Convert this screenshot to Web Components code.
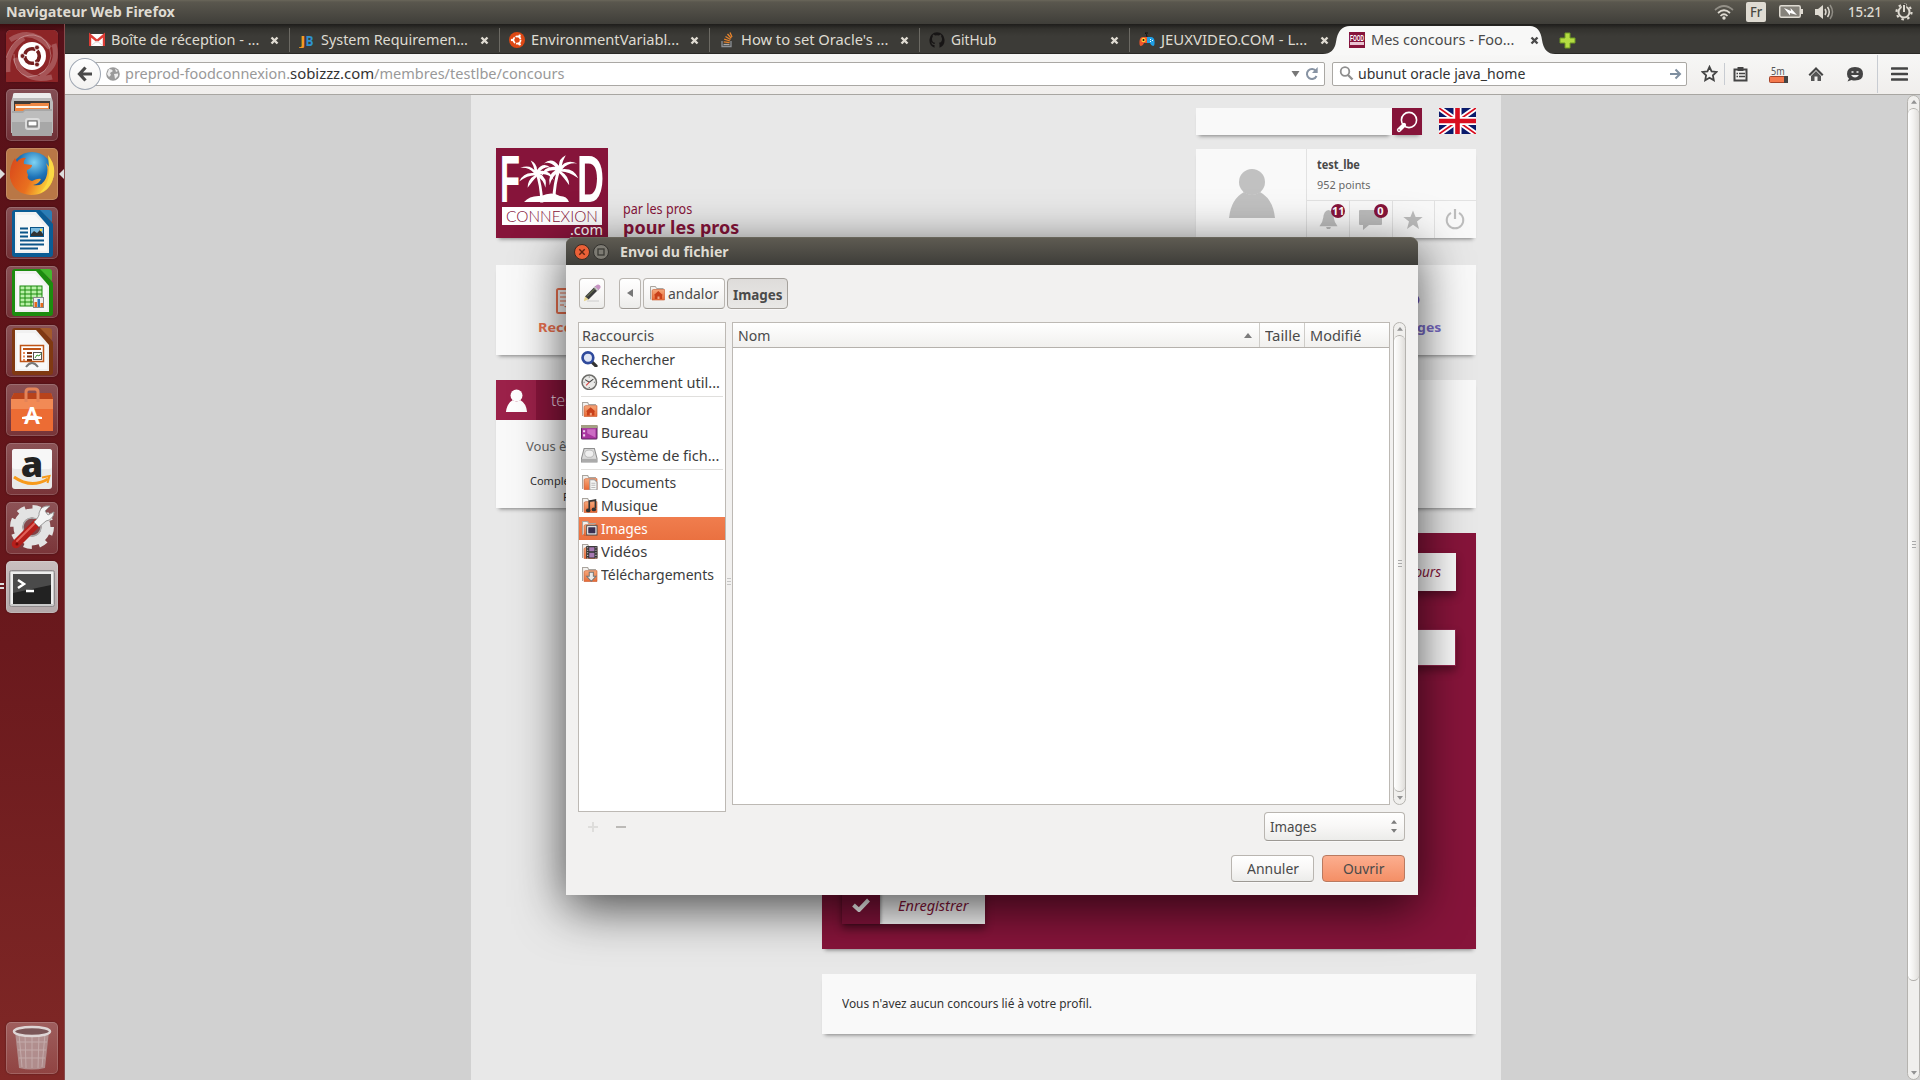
<!DOCTYPE html>
<html lang="fr">
<head>
<meta charset="utf-8">
<title>Mes concours - FoodConnexion</title>
<style>
html,body{margin:0;height:100%;overflow:hidden}
body{width:1920px;height:1080px;font-family:"Noto Sans","Open Sans",sans-serif;font-size:14.5px;color:#3c3c3c;background:#d1d1d1}
</style>
</head>
<body>
<desk-top></desk-top>
<script>
const fitted = new Set();
function fit(el){
  const s = el.shadowRoot.querySelector('span'), w = parseFloat(el.getAttribute('w'));
  const n = s.offsetWidth;
  if (w && n) s.style.transform = 'scaleX(' + (w / n) + ')';
}
function define(name, html, after){
  const t = document.createElement('template');
  t.innerHTML = html;
  customElements.define(name, class extends HTMLElement {
    connectedCallback(){
      if (this.shadowRoot) return;
      this.attachShadow({mode:'open'}).appendChild(t.content.cloneNode(true));
      if (after) after(this, this.shadowRoot);
    }
  });
}

/* Text squeezed or stretched to a given advance width */
define('fit-text', `<style>:host{display:inline-block;white-space:nowrap;flex:none}span{display:inline-block;transform-origin:0 50%}</style><span><slot></slot></span>`,
  el => { el.style.width = el.getAttribute('w') + 'px'; fitted.add(el); fit(el); });

const folder = extra => `<path d="M1.5 14.5V1.5H6.5L7.5 3.5H14.5" fill="#f3f1ee" stroke="#a9a49e"/><path d="M3 15V6Q3 4.5 4.5 4.5H15.5V15Z" fill="url(#fo)" stroke="#c6582c" stroke-width=".6"/><defs><linearGradient id="fo" x2="0" y2="1"><stop offset="0" stop-color="#f5a77a"/><stop offset="1" stop-color="#ea6a35"/></linearGradient></defs>${extra}`;
const doc = (c1, c2, body) => `<path d="M9 3H35L47 17V47Q47 50 44 50H9Q6 50 6 47V6Q6 3 9 3Z" fill="${c2}"/><path d="M34 3H43Q46 3 46 6V15Z" fill="${c1}"/><path d="M9 5H30L43 20V46H9Z" fill="#f1f1f1"/><path d="M11 8H29L41 22V44H11Z" fill="#fff" opacity=".6"/>${body}`;
const person = '<circle cx="25" cy="14" r="13"/><path d="M2 50Q4 31 17 24Q25 30 33 24Q46 31 48 50Z"/>';
const palm = (x, y, s) => `<g transform="translate(${x} ${y}) scale(${s})"><path d="M0 0Q-5-8-15-4Q-7-5-2 1Q-12 0-16 9Q-8 3-1 3Q-8 7-8 15Q-3 8 1 4Q7 7 9 15Q11 6 4 2Q12 1 17 8Q14-2 4-1Q9-6 14-4Q7-10 1-2Q1-8-5-11Q-2-6-1 0Z"/><path d="M-1 0Q4 13 4 29H7Q6 13 2 0Z"/></g>`;
const I = {
 dash:[52,52,`<rect width="52" height="52" fill="#8d2527"/><g fill="none" stroke="#fff"><path d="M4 10Q26-4 44 18M48 14Q54 36 34 46M46 47Q18 54 9 28M2 42Q0 20 18 8" opacity=".22" stroke-width="5"/><path d="M0 28Q8 4 28 5Q44 8 45 26Q43 46 22 47Q7 42 8 24" opacity=".3"/></g><circle cx="26" cy="26" r="14" fill="#fff"/><circle cx="26" cy="26" r="7.3" fill="none" stroke="#741f20" stroke-width="3.6" stroke-dasharray="13.5 1.8" stroke-dashoffset="6"/><g fill="#741f20" stroke="#fff" stroke-width=".7"><circle cx="16.5" cy="26" r="2.4"/><circle cx="31" cy="17.5" r="2.4"/><circle cx="31" cy="34.5" r="2.4"/></g>`],
 files:[52,52,`<path d="M7 6Q7 4 9 4H43Q45 4 45 6L47 13V44H5V13Z" fill="#bcbcbc"/><path d="M7 6Q7 4 9 4H43Q45 4 45 6L45 9H7Z" fill="#ececec"/><path d="M8 12H44V25H8Z" fill="#3f3b38"/><path d="M9 15H24L25 14H43V22H9Z" fill="#ee8743"/><path d="M10 17H42V19H10Z" fill="#fff4e8"/><path d="M6 22Q6 22 17 22L19 20H46V46Q46 47 45 47H7Q6 47 6 46Z" fill="#a7a7a7"/><path d="M6 24H17L19 22H46V33H6Z" fill="#bdbdbd"/><rect x="20" y="30" width="13" height="10" rx="2" fill="none" stroke="#dcdcdc" stroke-width="2"/><rect x="22" y="32" width="9" height="5" fill="#fff" stroke="#666"/>`],
 firefox:[52,52,`<defs><radialGradient id="g" cx=".55" cy=".25" r=".7"><stop offset="0" stop-color="#7fd3f4"/><stop offset=".5" stop-color="#1e74b8"/><stop offset="1" stop-color="#123a77"/></radialGradient><linearGradient id="f" x2="1" y2=".4"><stop offset="0" stop-color="#d8471b"/><stop offset=".6" stop-color="#e9701f"/><stop offset="1" stop-color="#fbd33b"/></linearGradient></defs><circle cx="26" cy="25" r="21" fill="url(#g)"/><path d="M46 14Q50 24 46 34Q40 47 25 47Q8 46 4 30Q3 18 9 10L11 14Q15 9 20 10Q17 13 18 16L26 17Q26 20 21 22Q20 24 22 27Q20 31 26 33Q32 30 35 31Q33 36 27 37Q36 39 40 30Q43 22 40 15L44 20Z" fill="url(#f)"/><path d="M42 7Q52 20 46 33Q42 42 34 45Q43 36 43 25Q43 16 42 7Z" fill="#fbd944"/>`],
 writer:[52,52,doc('#2b7db5','#0b5c95','<g stroke="#0b5488" stroke-width="2"><path d="M14 21.5H22M14 25.500H22M14 29.500H22M14 33.500H38M14 37.500H38M14 41.500H32"/></g><rect x="24.500" y="20.500" width="13" height="9" fill="#7dbbe0" stroke="#0b5488"/><path d="M25 29V27L28 24L31 26L34 23L37 27V29Z" fill="#333"/><circle cx="35" cy="23" r="1.200" fill="#ffd93b"/>')],
 calc:[52,52,doc('#43b82d','#1c8c0e','<rect x="14" y="20" width="22" height="20" fill="#b9f0a8" stroke="#1a8a0c"/><path d="M14 24H36M14 28H36M14 32H36M14 36H36M19 20V40M25 20V40M31 20V40" stroke="#1a8a0c"/><rect x="27.500" y="31.500" width="10" height="10" fill="#eee" stroke="#888"/><path d="M28.500 36H31V41H28.500Z" fill="#e66a1a"/><path d="M31.500 33H34V41H31.500Z" fill="#2d77b5"/><path d="M34.500 37H37V41H34.500Z" fill="#e66a1a"/>')],
 impress:[52,52,doc('#a35a2b','#803912','<rect x="14.500" y="20.500" width="23" height="16" fill="#fff" stroke="#bf5517" stroke-width="1.500"/><path d="M17 24H35" stroke="#bf5517" stroke-width="2"/><path d="M17 28H19M17 31.500H19M17 35H19" stroke="#e88b57" stroke-width="2"/><path d="M21 28H26M21 31.500H26M21 35H26" stroke="#7d3510" stroke-width="2"/><rect x="27.500" y="27.500" width="8" height="7" fill="#fff" stroke="#555"/><path d="M29 33L31 30L33 31L35 28.500" stroke="#35962e" fill="none"/><path d="M20 42Q23 38 26 38Q29 38 32 42" stroke="#777" fill="none" stroke-width="2"/>')],
 soft:[52,52,`<path d="M5 15L8 9H45L47 15V47H5Z" fill="#ec6c34"/><path d="M5 15L8 9H45L47 15Z" fill="#b8431b"/><path d="M5 15H47V25H5Z" fill="#f28a55"/><path d="M20 18V8Q20 5 23 5H29Q32 5 32 8V18" fill="none" stroke="#e38358" stroke-width="3"/><text x="26" y="40" font-family="Lato,sans-serif" font-weight="900" font-size="22" text-anchor="middle" fill="#fff">A</text><path d="M16 33Q26 30 36 33V35H16Z" fill="#fff"/>`],
 amazon:[52,52,`<rect x="6" y="6" width="40" height="40" rx="3" fill="#e9e9e9"/><rect x="6" y="6" width="40" height="20" rx="3" fill="#f7f7f7"/><text x="26" y="34" font-family="Open Sans,sans-serif" font-weight="800" font-size="36" text-anchor="middle" fill="#222">a</text><path d="M8 34Q25 46 42 36" stroke="#f79a1c" stroke-width="3" fill="none"/><path d="M36 34.500L43.500 33L41.500 40" stroke="#f79a1c" stroke-width="2" fill="none"/>`],
 settings:[52,52,`<circle cx="26" cy="25" r="14" fill="none" stroke="#e3e3e3" stroke-width="9"/><circle cx="26" cy="25" r="19.500" fill="none" stroke="#e3e3e3" stroke-width="5" stroke-dasharray="8 7.300"/><circle cx="26" cy="25" r="9" fill="none" stroke="#a9a9a9" stroke-width="1.500"/><path d="M10 42L31 21" stroke="#b51f1b" stroke-width="8.500" stroke-linecap="round"/><path d="M11 39L29 21" stroke="#e2625a" stroke-width="2" stroke-linecap="round"/><path d="M28 20L33 25L40 19Q47 18 48 10L42 13L39 9L44 4Q35 3 33 11Q34 14 28 20Z" fill="#f4f4f4" stroke="#9a9a9a"/><circle cx="11" cy="42" r="1.500" fill="#7c0f0c"/>`],
 term:[52,52,`<rect x="3.500" y="9.500" width="45" height="36" rx="2" fill="#c9c9c9" stroke="#8f8a8c"/><rect x="5" y="11" width="42" height="32" fill="#eee"/><rect x="7" y="13" width="38" height="30" fill="#222"/><path d="M7 13H45V24L7 32Z" fill="#4a4a4a"/><path d="M12 19L18 23L12 27" stroke="#fff" stroke-width="2.500" fill="none"/><path d="M20 30H28" stroke="#fff" stroke-width="2.500"/>`],
 trash:[52,52,`<path d="M9 9H43L39 46Q26 49 13 46Z" fill="#b9a3a3" opacity=".75"/><path d="M13 12L16 45M19 12L20 46M26 12V46M33 12L32 46M39 12L36 45M11 20H41M12 28H40M13 36H39" stroke="#e8dfdf" opacity=".35"/><ellipse cx="26" cy="9.500" rx="18" ry="4.500" fill="#7b5658" stroke="#ded5d5" stroke-width="2.500"/>`],
 gmail:[16,16,`<rect x="0" y="2" width="16" height="12" rx="1" fill="#fff"/><path d="M1 14V3L8 9L15 3V14" stroke="#dd3c35" stroke-width="2.400" fill="none"/><path d="M3 13L8 9L13 13" stroke="#ddd" fill="none"/>`],
 jb:[16,16,`<text x="1" y="13.500" font-family="Open Sans" font-weight="700" font-size="14" fill="#f59a23" textLength="5.500" lengthAdjust="spacingAndGlyphs">J</text><text x="6.500" y="13.500" font-family="Open Sans" font-weight="700" font-size="14" fill="#2f92cf" textLength="8" lengthAdjust="spacingAndGlyphs">B</text>`],
 ubuntu:[16,16,`<circle cx="8" cy="8" r="8" fill="#dd4814"/><circle cx="8" cy="8" r="3.600" fill="none" stroke="#fff" stroke-width="1.700" stroke-dasharray="6.500 1"/><circle cx="3" cy="8" r="1.200" fill="#fff"/><circle cx="10.600" cy="3.700" r="1.200" fill="#fff"/><circle cx="10.600" cy="12.300" r="1.200" fill="#fff"/>`],
 so:[16,16,`<path d="M3 9V14.500H12V9" stroke="#8d9196" stroke-width="1.300" fill="none"/><path d="M4.500 12.500H10.500" stroke="#aaa" stroke-width="1.300"/><path d="M4.700 9.900L10.600 10.700M5.200 7.200L11 9M6.500 4.500L11.500 7.500M8.500 2L12.300 6.300M11 .5L13 5" stroke="#e8842c" stroke-width="1.300"/>`],
 gh:[16,16,`<path d="M8 .3a8 8 0 0 0-2.500 15.400V13Q3.500 13.300 3 12Q2.500 11 1.800 10.600Q3 10.200 3.800 11.300Q4.500 12.300 5.600 11.900Q5.700 11.200 6.100 10.800Q3 10.500 3 7Q3 5.800 3.800 4.800Q3.500 3.700 3.900 2.600Q5 2.600 6.100 3.500Q8 3 9.900 3.500Q11 2.600 12.100 2.600Q12.500 3.700 12.200 4.800Q13 5.800 13 7Q13 10.500 9.900 10.800Q10.500 11.300 10.500 12.500V15.700A8 8 0 0 0 8 .3Z" fill="#171515"/>`],
 jv:[16,16,`<path d="M8 5Q8 2 6 1L9 1" stroke="#111" fill="none"/><path d="M8 5H4Q1 5 .5 9Q0 14 2 14Q4 14 5 11H8Z" fill="#f0562c"/><path d="M8 5H12Q15 5 15.500 9Q16 14 14 14Q12 14 11 11H8Z" fill="#1f9fe5"/><circle cx="4.500" cy="8" r="2.200" fill="#ffd338"/><circle cx="4.500" cy="8" r="1" fill="#111"/><path d="M11 7H12V8H11ZM13 8H14V9H13ZM11 9H12V10H11Z" fill="#fff"/>`],
 food:[16,16,`<rect width="16" height="16" fill="#86143a"/><text x="1" y="9" font-family="Liberation Sans" font-weight="700" font-size="9" fill="#fff" textLength="14" lengthAdjust="spacingAndGlyphs">FOOD</text><path d="M1 10H15V13H1Z" fill="#e9c3d0"/>`],
 x:[9,9,`<path d="M1.500 1.500L7.500 7.500M7.500 1.500L1.500 7.500" stroke="currentColor" stroke-width="2.400"/>`],
 plus:[17,17,`<path d="M6 1H11V6H16V11H11V16H6V11H1V6H6Z" fill="#b4dc42" stroke="#6f9a22"/>`],
 back:[16,16,`<path d="M8.500 1.500L2.500 8L8.500 14.500M3 8H15" stroke="#4a4a4a" stroke-width="3.200" fill="none"/>`],
 globe:[14,14,`<circle cx="7" cy="7" r="6.800" fill="#9a9a9a"/><path d="M3 2Q6 2 7 4L4 6L5 8L3 10L1 7ZM9 1.500L12 4L10 5ZM8 7L12 6.500L12 9L9 12L8.500 9Z" fill="#eee"/>`],
 tri:[9,6,`<path d="M.5 0H8.500L4.500 6Z" fill="#777"/>`],
 reload:[14,14,`<path d="M11 4A5 5 0 1 0 11.500 9" stroke="#8793a3" stroke-width="2" fill="none"/><path d="M12.700 0V6H7Z" fill="#8793a3"/>`],
 mag:[15,15,`<circle cx="6" cy="5.500" r="4.300" stroke="#8f8f8f" stroke-width="1.800" fill="none"/><path d="M9 9L13.500 13.500" stroke="#8f8f8f" stroke-width="2.300"/>`],
 go:[12,12,`<path d="M0 6H10M5.500 1.500L10 6L5.500 10.500" stroke="#7f8fa0" stroke-width="2" fill="none"/>`],
 star:[17,17,`<path d="M8.500 1.800L10.600 6.300L15.500 6.900L11.900 10.300L12.800 15.200L8.500 12.800L4.200 15.200L5.100 10.300L1.500 6.900L6.400 6.300Z" fill="none" stroke="#444" stroke-width="1.800"/>`],
 list:[15,16,`<path d="M1.500 3.500H13.500V14.500H1.500Z" fill="none" stroke="#444" stroke-width="2"/><path d="M4.500 1H10.500V5H4.500Z" fill="#444"/><path d="M3.500 7.500H5M6 7.500H12M3.500 10.500H5M6 10.500H12" stroke="#444" stroke-width="1.500"/>`],
 home:[16,16,`<path d="M8 1L15.500 8.500L14 10L8 4L2 10L.5 8.500Z" fill="#444"/><path d="M3 10L8 5L13 10V15H9.500V10.500H6.500V15H3Z" fill="#555"/>`],
 smile:[18,16,`<path d="M9 1Q17 1 17 8Q17 14.500 9 14.500Q7 14.500 5.500 14L1.500 15.500L3 12.500Q1 11 1 8Q1 1 9 1Z" fill="#444"/><path d="M5 9Q9 14 13 9Z" fill="#eee"/><path d="M5.500 6H7.500M10.500 6H12.500" stroke="#eee" stroke-width="1.600"/>`],
 menu:[17,14,`<path d="M1 1.500H16M1 7H16M1 12.500H16" stroke="#444" stroke-width="2.600" stroke-linecap="round"/>`],
 pill:[19,7,`<rect x=".5" y=".5" width="18" height="6" rx="1" fill="#f4784c" stroke="#a5452a"/><rect x="15" y="0" width="4" height="7" fill="#444"/>`],
 wifi:[20,16,`<g fill="none" stroke="#dfdbd2" stroke-width="1.700"><path d="M1 6Q10-2 19 6" opacity=".45"/><path d="M4 9Q10 3.500 16 9"/><path d="M6.500 12Q10 8.500 13.500 12"/></g><circle cx="10" cy="14" r="1.700" fill="#dfdbd2"/>`],
 batt:[24,13,`<rect x=".75" y=".75" width="20.500" height="11.500" rx="1.500" fill="#85827a" stroke="#dfdbd2" stroke-width="1.500"/><path d="M22 4H24V9H22Z" fill="#dfdbd2"/><path d="M5 3L12 6L11.500 3L18 10L11 8L11 10.500Z" fill="#fff"/>`],
 vol:[20,16,`<path d="M0 5H3L8 1V15L3 11H0Z" fill="#dfdbd2"/><g fill="none" stroke="#dfdbd2" stroke-width="1.500"><path d="M10 5Q12 8 10 11"/><path d="M12.500 3Q16 8 12.500 13"/><path d="M15 1Q20 8 15 15" opacity=".45"/></g>`],
 gear:[18,18,`<circle cx="9" cy="9" r="5.500" fill="none" stroke="#dfdbd2" stroke-width="2"/><circle cx="9" cy="9" r="7.500" fill="none" stroke="#dfdbd2" stroke-width="2.200" stroke-dasharray="2.500 3.390"/><path d="M9 1V9" stroke="#4c4a43" stroke-width="4.500"/><path d="M9 2V9" stroke="#dfdbd2" stroke-width="2"/>`],
 logo:[112,90,`<rect width="112" height="90" fill="#86143a"/><g fill="#fff"><text x="4" y="54" font-family="Liberation Sans Narrow,Liberation Sans" font-weight="700" font-size="67" textLength="20" lengthAdjust="spacingAndGlyphs">F</text><text x="81" y="54" font-family="Liberation Sans" font-weight="700" font-size="67" textLength="27" lengthAdjust="spacingAndGlyphs">D</text>${palm(40,24,1.05)}${palm(64,20,1.1).replace('scale(1.1)','scale(-1.150 1.150)')}<path d="M28 54Q34 47 45 48Q56 43 64 48Q71 48 73 54Z"/><rect x="6" y="59" width="100" height="18"/><text x="74" y="87" font-family="Noto Sans" font-size="14" textLength="33" lengthAdjust="spacingAndGlyphs">.com</text></g><text x="10" y="73.500" font-family="Lato" font-weight="300" font-size="15.500" fill="#86143a" textLength="92" lengthAdjust="spacingAndGlyphs">CONNEXION</text>`],
 search2:[30,27,`<circle cx="17" cy="12" r="7.600" stroke="#fff" stroke-width="1.600" fill="none"/><path d="M12 17L7 22" stroke="#fff" stroke-width="4.200" stroke-linecap="round"/><circle cx="7" cy="22" r=".8" fill="#86143a"/>`],
 flag:[37,26,`<rect width="37" height="26" fill="#0a1a6b"/><path d="M0 0L37 26M37 0L0 26" stroke="#fff" stroke-width="5.500"/><path d="M0 0L37 26M37 0L0 26" stroke="#d80f20" stroke-width="1.800"/><path d="M18.500 0V26M0 13H37" stroke="#fff" stroke-width="8"/><path d="M18.500 0V26M0 13H37" stroke="#d80f20" stroke-width="4.600"/>`],
 avatar:[50,50,`<g fill="#c1c1c1">${person}</g>`],
 person:[50,50,`<g fill="#fff">${person}</g>`],
 bell:[20,21,`<path d="M10 0Q15 1 15.500 8Q16 13 19.500 17H.5Q4 13 4.500 8Q5 1 10 0Z" fill="#bdbdbd"/><path d="M7.500 18H12.500Q12 20.500 10 20.500Q8 20.500 7.500 18Z" fill="#bdbdbd"/>`],
 chat:[23,20,`<path d="M1 0H22Q23 0 23 1V14Q23 15 22 15H10L4 20V15H1Q0 15 0 14V1Q0 0 1 0Z" fill="#bdbdbd"/>`],
 fstar:[20,20,`<path d="M10 .5L12.600 7H19.700L14 11.500L16 19L10 14.700L4 19L6 11.500L.3 7H7.400Z" fill="#bdbdbd"/>`],
 power:[20,21,`<path d="M6 3.800A8.300 8.300 0 1 0 14 3.800" fill="none" stroke="#bdbdbd" stroke-width="2"/><path d="M10 0V10" stroke="#bdbdbd" stroke-width="2.200"/>`],
 recipe:[26,26,`<rect x="1" y="1" width="24" height="24" rx="1.500" fill="none" stroke="#e9704f" stroke-width="2"/><path d="M4 5H20M4 9H20M4 13H10M4 17H8" stroke="#e9704f" stroke-width="1.200"/><path d="M8 18L13 18V22Z" fill="#e9704f"/>`],
 msg:[26,24,`<ellipse cx="13" cy="12" rx="12.500" ry="8" fill="#6a55b8"/>`],
 check:[18,14,`<path d="M1.500 7L7 12L16.500 2" stroke="#fff" stroke-width="4" fill="none"/>`],
 pencil:[18,18,`<path d="M4 17H16" stroke="#ccc"/><path d="M2 12.500L12.500 2L16 5L5.500 15.500Z" fill="#3b3b3b"/><path d="M11.500 3L13 1.500Q15-.5 16.800 1.300Q18.500 3 16.500 5L15 6.500Z" fill="#c793c3"/><path d="M10.700 3.800L12 2.500L15.600 6L14.300 7.300Z" fill="#ccc"/><path d="M4 12.500L12 4.500" stroke="#7b8a5b"/><path d="M2 12.500L5.500 15.500L.8 17.200Z" fill="#e5d38c"/>`],
 left:[6,8,`<path d="M6 0V8L0 4Z" fill="#777"/>`],
 up:[8,5,`<path d="M0 5H8L4 0Z" fill="#7c7c7c"/>`],
 down:[8,5,`<path d="M0 0H8L4 5Z" fill="#7c7c7c"/>`],
 find:[16,16,`<path d="M10 10L14.500 14.500" stroke="#333" stroke-width="3.200" stroke-linecap="round"/><circle cx="6.700" cy="6.500" r="5.200" fill="#dfe5f3" stroke="#2f4a9c" stroke-width="2.600"/>`],
 clock:[16,16,`<circle cx="8" cy="8" r="7" fill="#e9e9e7" stroke="#6d6d6a" stroke-width="1.500"/><path d="M8 8L4 5.500M8 8L12 5" stroke="#444"/><path d="M8 8L5 11" stroke="#d33"/><path d="M8 2.500V3.500M8 12.500V13.500M2.500 8H3.500M12.500 8H13.500" stroke="#666"/>`],
 fhome:[16,16,folder('<path d="M9.300 6L14 10.300H13V14H5.800V10.300H4.700Z" fill="#c8401a"/><path d="M8.500 11.500H10.500V14H8.500Z" fill="#f2a580"/>')],
 desk:[16,16,`<rect x=".5" y="1.500" width="15" height="13" rx="1" fill="#a835a0" stroke="#5d2560"/><rect x="0" y="1" width="16" height="3" fill="#a4a184"/><path d="M2 6H4V8H2ZM2 10H4V12H2Z" fill="#f1d9ee"/><path d="M6 5H14V13L6 9Z" fill="#cb6cc4"/>`],
 disk:[16,16,`<path d="M3 1.500H13L15.500 11V14.500H.5V11Z" fill="#d9d9d9" stroke="#8e8e8e"/><path d="M.5 11.500H15.500V14.500H.5Z" fill="#aaa"/><ellipse cx="8" cy="6.500" rx="4.500" ry="3.500" fill="#efefef" stroke="#bbb"/>`],
 fdoc:[16,16,folder('<path d="M8.500 5.500H13L15.500 8V15.500H8.500Z" fill="#f6f6f4" stroke="#999"/><path d="M10 9H14M10 11H14M10 13H14" stroke="#bbb"/>')],
 fmus:[16,16,folder('<path d="M8 13V4L14 3V11" stroke="#333" stroke-width="1.600" fill="none"/><ellipse cx="7" cy="13" rx="2.200" ry="1.800" fill="#333"/><ellipse cx="12.500" cy="12" rx="2.200" ry="1.800" fill="#333"/>')],
 fimg:[16,16,folder('<rect x="5.500" y="5.500" width="10" height="9" fill="#fff" stroke="#555"/><rect x="7" y="7" width="7" height="6" fill="#3a2f4f"/>')],
 fvid:[16,16,folder('<rect x="5" y="3" width="11" height="12" fill="#333"/><path d="M8 4H13V8H8ZM8 9.500H13V14H8Z" fill="#a779b3"/><path d="M6.500 4V15M14.500 4V15" stroke="#ddd" stroke-dasharray="1 1.500"/>')],
 fdl:[16,16,folder('<path d="M8 6H12V10H14.500L10 14.800L5.500 10H8Z" fill="#e9e9e9" stroke="#777"/>')],
 wclose:[16,16,`<circle cx="8" cy="8" r="7.500" fill="#ea6037" stroke="#3a2a22"/><path d="M5.300 5.300L10.700 10.700M10.700 5.300L5.300 10.700" stroke="#5c2311" stroke-width="1.400"/>`],
 wmax:[16,16,`<circle cx="8" cy="8" r="7.500" fill="#7d7b73" stroke="#33322e"/><rect x="5" y="5" width="6" height="6" fill="none" stroke="#3b3a35" stroke-width="1.300"/>`]
};
define('ui-icon', `<style>:host{display:inline-block;flex:none;line-height:0}svg{display:block}</style><div></div>`, (el, r) => {
  const [w,h,b] = I[el.getAttribute('name')] || [1,1,''], s = parseFloat(el.getAttribute('s')) || w;
  r.querySelector('div').innerHTML = `<svg width="${s}" height="${s*h/w}" viewBox="0 0 ${w} ${h}">${b}</svg>`;
});

define('top-panel', `<style>
:host{display:flex;height:24px;box-sizing:border-box;background:linear-gradient(#6a665a 0,#5a574e 2px,#3f3e39);color:#dfdbd2;align-items:center;padding:0 7px 1px 6px;font-weight:500;font-size:14px}
.t{flex:1;font-weight:700}.i{display:flex;align-items:center}
.fr{background:#dfdbd2;color:#4a4942;width:20px;height:20px;line-height:20px;border-radius:2px;text-align:center;margin:1px 13px 0 12px}
</style><div class="t"><fit-text w="169">Navigateur Web Firefox</fit-text></div>
<div class="i"><ui-icon name="wifi"></ui-icon><div class="fr"><fit-text w="12">Fr</fit-text></div><ui-icon name="batt"></ui-icon><ui-icon name="vol" style="margin:0 13px 0 12px"></ui-icon><fit-text w="34" style="margin-right:13px">15:21</fit-text><ui-icon name="gear"></ui-icon></div>`);

define('launch-tile', `<style>
:host{display:block;position:relative;width:52px;height:52px;border-radius:5px;background:linear-gradient(rgba(255,255,255,.26),rgba(255,255,255,.13));box-shadow:inset 0 0 0 1px rgba(255,255,255,.16),0 0 2px rgba(0,0,0,.4);overflow:visible}
div{border-radius:5px;overflow:hidden}
:host([running])::before{content:"";position:absolute;left:-6px;top:21px;border:5px solid transparent;border-left-color:#ddd;border-right:0}
:host([running])::after{content:"";position:absolute;right:-6px;top:21px;border:5px solid transparent;border-right-color:#ddd;border-left:0}
:host([many])::before{content:"";position:absolute;left:-6px;top:22px;width:4px;height:2px;border:solid #ddd;border-width:2px 0}
</style><div><slot></slot></div>`);

define('app-launcher', `<style>
:host{display:flex;flex:none;flex-direction:column;gap:7px;width:65px;height:1056px;box-sizing:border-box;padding:6px 0 6px 6px;background:linear-gradient(#3c0b0e 0,#58111a 8px,#5c1218 200px,#6a191d 620px,#802826);border-right:1px solid #874a4c}
.end{margin-top:auto}
</style>
<launch-tile><ui-icon name="dash"></ui-icon></launch-tile>
<launch-tile><ui-icon name="files"></ui-icon></launch-tile>
<launch-tile running style="background:#b97746"><ui-icon name="firefox"></ui-icon></launch-tile>
<launch-tile><ui-icon name="writer"></ui-icon></launch-tile>
<launch-tile><ui-icon name="calc"></ui-icon></launch-tile>
<launch-tile><ui-icon name="impress"></ui-icon></launch-tile>
<launch-tile><ui-icon name="soft"></ui-icon></launch-tile>
<launch-tile><ui-icon name="amazon"></ui-icon></launch-tile>
<launch-tile><ui-icon name="settings"></ui-icon></launch-tile>
<launch-tile many style="background:linear-gradient(#c9bfc0,#b3a8a9)"><ui-icon name="term"></ui-icon></launch-tile>
<launch-tile class="end"><ui-icon name="trash"></ui-icon></launch-tile>`);

define('browser-tab', `<style>
:host{display:flex;width:210px;height:24px;box-sizing:border-box;align-items:center;padding:0 10px 0 9px;border-right:1px solid #6b6963;color:#dfdbd2;position:relative;flex:none;margin-top:4px}
ui-icon,.l{position:relative}
.l{flex:1;margin-left:6px;line-height:20px;margin-top:-1px}
svg{position:absolute;left:-17px;top:-2px;display:none}
:host([active]) svg{display:block}
:host([active]){color:#4a4a4a;border-color:transparent}
:host([last]){border-color:transparent}
</style><svg width="238" height="29" viewBox="0 0 238 29"><path d="M0 28Q11 28 13 16Q15 0 27 0H207Q217 0 219 14Q221 28 232 28V29H0Z" fill="#f8f8f7"/></svg><ui-icon name="none"></ui-icon><div class="l"><slot></slot></div><ui-icon name="x"></ui-icon>`,
 (el, r) => { const i = document.createElement('ui-icon'); i.setAttribute('name', el.getAttribute('icon')); r.querySelector('ui-icon').replaceWith(i); });

define('browser-chrome', `<style>
:host{display:block;height:71px}
.tabs{display:flex;height:30px;box-sizing:border-box;padding-left:15px;background:linear-gradient(#1e1d1b 0,#33322e 5px,#3c3b37 12px);border-bottom:1px solid #2a2926;align-items:flex-start;font-size:14px}
.nav{display:flex;height:41px;box-sizing:border-box;border-bottom:1px solid #a8a6a2;background:linear-gradient(#f7f7f6,#f0eeec);align-items:center;padding:0 12.500px 1px 4px;font-size:14px}
.back{width:30px;height:30px;border:1px solid #9fa7b3;border-radius:50%;background:linear-gradient(#fff,#f3f2f0);display:flex;align-items:center;justify-content:center;position:relative;z-index:1}
.box{box-sizing:border-box;height:24px;border:1px solid #aaa8a4;background:#fff;border-radius:2px;display:flex;align-items:center}
.url{width:1240px;margin-left:-16px;padding:0 5px 0 20px;color:#999}
b{font-weight:400;color:#333}
.s{width:355px;margin-left:7px;padding:0 4px 0 6px;color:#333}
.g{flex:1}
.five{display:flex;flex-direction:column;align-items:center;font-size:11px;line-height:11px;gap:0;color:#555}
.v{width:1px;background:#c8ccd2;height:22px}
</style>
<div class="tabs">
<browser-tab icon="gmail"><fit-text w="148">Boîte de réception - ...</fit-text></browser-tab>
<browser-tab icon="jb"><fit-text w="147">System Requiremen...</fit-text></browser-tab>
<browser-tab icon="ubuntu"><fit-text w="148">EnvironmentVariabl...</fit-text></browser-tab>
<browser-tab icon="so"><fit-text w="147">How to set Oracle's ...</fit-text></browser-tab>
<browser-tab icon="gh"><fit-text w="46">GitHub</fit-text></browser-tab>
<browser-tab icon="jv" last><fit-text w="146">JEUXVIDEO.COM - L...</fit-text></browser-tab>
<browser-tab icon="food" active><fit-text w="143">Mes concours - Foo...</fit-text></browser-tab>
<ui-icon name="plus" style="margin-top:7.500px;margin-left:9px"></ui-icon>
</div>
<div class="nav"><div class="back"><ui-icon name="back"></ui-icon></div>
<div class="box url"><ui-icon name="globe"></ui-icon><fit-text w="165" style="margin-left:5px">preprod-foodconnexion.</fit-text><b><fit-text w="84">sobizzz.com</fit-text></b><fit-text w="190">/membres/testlbe/concours</fit-text><span class="g"></span><ui-icon name="tri"></ui-icon><ui-icon name="reload" style="margin-left:5px"></ui-icon></div>
<div class="box s"><ui-icon name="mag"></ui-icon><fit-text w="167" style="margin-left:4px">ubunut oracle java_home</fit-text><span class="g"></span><ui-icon name="go"></ui-icon></div>
<ui-icon name="star" style="margin-left:14px"></ui-icon><span class="v" style="margin:0 8px 0 6px"></span><ui-icon name="list"></ui-icon>
<div class="five" style="margin:0 20px 0 21px"><fit-text w="14">5m</fit-text><ui-icon name="pill"></ui-icon></div>
<ui-icon name="home"></ui-icon><ui-icon name="smile" style="margin-left:22px"></ui-icon><span class="v" style="margin:0 13px 0 13px;height:38px"></span><ui-icon name="menu"></ui-icon></div>`);

define('grip-lines', `<style>:host{display:flex;flex-direction:column;gap:2px;width:4px}i{height:1px;background:#aaa}</style><i></i><i></i><i></i>`);
define('scroll-bar', `<style>
:host{display:flex;flex:none;flex-direction:column;width:13px;box-sizing:border-box;border:1px solid #b5b3af;border-radius:7px;background:#f0efed;overflow:hidden}
.b{height:12px;display:flex;align-items:center;justify-content:center}
.b ui-icon{opacity:.8}
.t{flex:1;border:1px solid #b0aeaa;border-width:1px 0;border-radius:7px;background:linear-gradient(90deg,#fff,#f2f1ef 50%,#dfddda);display:flex;align-items:center;justify-content:center}
.r{height:var(--rest,0px)}
</style><div class="b"><ui-icon name="up" s="6"></ui-icon></div><div class="t"><grip-lines></grip-lines></div><div class="r"></div><div class="b"><ui-icon name="down" s="6"></ui-icon></div>`);

define('site-card', `<style>:host{display:block;box-sizing:border-box;background:#f9f9f9;box-shadow:0 4px 4px -3px rgba(0,0,0,.45)}</style><slot></slot>`);

define('site-header', `<style>
:host{display:flex;height:170px;box-sizing:border-box;padding-top:13px;justify-content:space-between;align-items:flex-start}
.brand{display:flex;padding-top:40px}
.logo{box-shadow:0 4px 4px -3px rgba(0,0,0,.45);height:90px}
.slogan{padding:51px 0 0 15px;color:#86143a}
.slogan div{line-height:20px;height:18px;font-size:13.500px}.slogan .b{font-size:18px;font-weight:700}
.right{width:280px}
.s{display:flex;height:27px}.s site-card{width:196px}.btn{background:#86143a;width:30px;height:27px;margin-right:17px;box-shadow:0 4px 4px -3px rgba(0,0,0,.35)}
.user{display:flex;height:89px;margin-top:14px}
.av{width:111px;border-right:1px solid #e2e2e2;display:flex;justify-content:center;padding:19px 0 0 1px;box-sizing:border-box}
.in{flex:1}.n{height:52px;border-bottom:1px solid #e2e2e2;padding:6px 0 0 10px;box-sizing:border-box;line-height:20px;font-size:11.500px;color:#666}
.n b{color:#484848}
.n div{height:20px;line-height:19px}
.c{display:grid;grid-template-columns:repeat(4,1fr);height:37px}
.c>div{border-left:1px solid #e2e2e2;display:flex;justify-content:center;align-items:center;position:relative}
.c>div:first-child{border:0}
.bd{position:absolute;right:4px;top:3px;width:14px;height:14px;border-radius:50%;background:#86143a;color:#fff;font-weight:700;font-size:11px;line-height:14px;text-align:center}
</style>
<div class="brand"><div class="logo"><ui-icon name="logo"></ui-icon></div><div class="slogan"><div><fit-text w="69">par les pros</fit-text></div><div class="b"><fit-text w="116">pour les pros</fit-text></div></div></div>
<div class="right"><div class="s"><site-card></site-card><div class="btn"><ui-icon name="search2"></ui-icon></div><ui-icon name="flag"></ui-icon></div>
<site-card class="u"><div class="user"><div class="av"><ui-icon name="avatar"></ui-icon></div><div class="in"><div class="n"><div><b><fit-text w="43">test_lbe</fit-text></b></div><div><fit-text w="54">952 points</fit-text></div></div>
<div class="c"><div><ui-icon name="bell" s="19"></ui-icon><span class="bd">11</span></div><div><ui-icon name="chat"></ui-icon><span class="bd">0</span></div><div><ui-icon name="fstar"></ui-icon></div><div><ui-icon name="power"></ui-icon></div></div></div></div></site-card></div>`);

define('site-page', `<style>
:host{display:block;width:1030px;height:985px;box-sizing:border-box;padding:0 25px;background:#e8e8e8;font-size:12px}
.menu{height:90px;display:flex;justify-content:space-between;padding:23px 35px 0 41.500px;box-sizing:border-box;font-weight:700;font-size:13px}
.menu div{display:flex;flex-direction:column;align-items:center;gap:4px;line-height:18px}
.row{display:flex;justify-content:space-between;margin-top:25px}
.h{display:flex;height:40px;background:#86143a;color:#f0dfe6;font-family:"Open Sans",sans-serif;font-weight:300;font-size:16px;align-items:center}
.h .p{width:40px;height:40px;background:#9b2149;display:flex;justify-content:center;align-items:center;margin-right:15px}
.prof{width:306px;height:128px;color:#333;font-size:11px}
.prof p{margin:0;line-height:16px}
.red{height:416px;background:#86143a;display:flex;flex-direction:column;padding:20px;box-sizing:border-box;color:#86143a;font-style:italic;font-size:13.500px;align-items:flex-end}
.w{background:#f9f9f9;box-shadow:0 5px 8px rgba(0,0,0,.35);box-sizing:border-box;text-align:right}
.btn{width:200px;height:38px;line-height:38px;padding-right:15px}
.in{width:614px;height:37px;margin-top:38px;border:1px solid #8e2148}
.save{display:flex;align-self:flex-start;margin-top:auto;margin-bottom:5px;width:143px;height:38px;background:#f9f9f9;box-shadow:0 5px 8px rgba(0,0,0,.4)}
.save .k{width:38px;background:#80133a;display:flex;align-items:center;justify-content:center;box-shadow:1px 0 3px rgba(0,0,0,.4);margin-right:18px}
.col{width:654px}
.none{height:60px;margin-top:25px;padding:0 20px;line-height:59px;color:#333}
</style>
<site-header></site-header>
<site-card><div class="menu"><div style="color:#e9704f"><ui-icon name="recipe"></ui-icon><fit-text w="62">Recettes</fit-text></div><div style="color:#7a6cc8;gap:6px"><ui-icon name="msg"></ui-icon><fit-text w="68">Messages</fit-text></div></div></site-card>
<div class="row"><site-card class="prof"><div class="h"><div class="p"><ui-icon name="person" s="23"></ui-icon></div>testlbe</div>
<p style="padding:18px 0 0 30px;font-size:13px;color:#666">Vous êtes</p><p style="padding:19px 0 0 34px">Complétez</p><p style="padding-left:67px">Profil</p></site-card><site-card class="col"></site-card></div>
<div class="row"><div></div><div class="col"><site-card class="red0"><div class="red"><div class="w btn">Mes concours</div><div class="w in"></div><div class="save"><div class="k"><ui-icon name="check"></ui-icon></div><fit-text w="70" style="line-height:40px">Enregistrer</fit-text></div></div></site-card>
<site-card class="none"><fit-text w="250">Vous n'avez aucun concours lié à votre profil.</fit-text></site-card></div></div>`);

define('gtk-button', `<style>
:host{display:flex;align-items:center;justify-content:center;gap:3px;box-sizing:border-box;border:1px solid #b9b5b0;border-bottom-color:#9d9994;border-radius:4px;background:linear-gradient(#fff,#f8f7f6 50%,#ececea);color:#4a4a4a;box-shadow:0 1px 0 #fff8;padding-bottom:2px}
:host([pressed]){background:linear-gradient(#dedcda,#e9e8e6);font-weight:700;border-color:#a5a19c}
:host([suggested]){background:linear-gradient(#fcae8f,#f48f66);border-color:#b97a60}
</style><slot></slot>`);

define('place-row', `<style>
:host{display:flex;box-sizing:border-box;height:23px;align-items:center;padding:0 0 1.500px 2px;gap:3.500px}
:host([selected]){background:linear-gradient(#f07d4e,#ea7140);color:#fff}
</style><slot></slot>`);

const place = (i, t, w, a='') => `<place-row ${a}><ui-icon name="${i}" s="16.500"></ui-icon><fit-text w="${w}">${t}</fit-text></place-row>`;
define('file-dialog', `<style>
:host{display:flex;flex-direction:column;width:852px;height:658px;border-radius:7px 7px 0 0;background:#f2f1f0;box-shadow:0 12px 50px rgba(0,0,0,.7)}
.title{height:28px;box-sizing:border-box;display:flex;align-items:center;padding:1px 0 0 7.500px;gap:3px;border-radius:7px 7px 0 0;background:linear-gradient(#5e5b52,#3e3d39);border-top:1px solid #68655b;color:#dfdbd2;font-weight:700}
.title fit-text{margin:-2px 0 0 8px}
.path{display:flex;height:31px;margin:13px 13px}
.panes{display:flex;height:519px;margin:0 12px 0 12px}
.h{height:25px;box-sizing:border-box;border-bottom:1px solid #b5b1ac;background:linear-gradient(#fff,#f1f0ee);display:flex;align-items:center;color:#4a4a4a}
.left{width:148px}
.places{height:490px;box-sizing:border-box;border:1px solid #bdb9b4;background:#fff}
hr{border:0;height:1px;background:#e0dfdd;margin:2px 2px 1px}
.pm{display:flex;padding:10px 10px;gap:18px}
.split{width:6px;display:flex;align-items:center;padding-bottom:0}
.right{flex:1}
.l{display:flex;height:483px;gap:3px}
.list{flex:1;border:1px solid #bdb9b4;background:#fff;box-sizing:border-box}
.list .h>*{box-sizing:border-box}
.ct{display:flex;flex-direction:column;gap:5px;padding-top:2px}
.act{display:flex;justify-content:flex-end;gap:8px;margin:14px 13px 0}
</style>
<div class="title"><ui-icon name="wclose"></ui-icon><ui-icon name="wmax"></ui-icon><fit-text w="109">Envoi du fichier</fit-text></div>
<div class="path"><gtk-button style="width:26px"><ui-icon name="pencil"></ui-icon></gtk-button><gtk-button style="width:22px;margin-left:14px"><ui-icon name="left"></ui-icon></gtk-button><gtk-button style="width:82px;margin-left:2px"><ui-icon name="fhome"></ui-icon><fit-text w="51">andalor</fit-text></gtk-button><gtk-button pressed style="width:61px;margin-left:2px;padding-bottom:0"><fit-text w="50">Images</fit-text></gtk-button></div>
<div class="panes"><div class="left"><div class="places"><div class="h" style="padding-left:3px"><fit-text w="72">Raccourcis</fit-text></div>
${place('find','Rechercher',74)}${place('clock','Récemment util...',119)}<hr>${place('fhome','andalor',51)}${place('desk','Bureau',47)}${place('disk','Système de fich...',118)}<hr>${place('fdoc','Documents',75)}${place('fmus','Musique',57)}${place('fimg','Images',47,'selected')}${place('fvid','Vidéos',46)}${place('fdl','Téléchargements',113)}</div>
<div class="pm"><svg width="10" height="10"><path d="M5 0V10M0 5H10" stroke="#dedddb" stroke-width="2"/></svg><svg width="10" height="10"><path d="M0 5H10" stroke="#bcbab7" stroke-width="2"/></svg></div></div>
<div class="split"><grip-lines style="opacity:.6;margin-left:1px"></grip-lines></div>
<div class="right"><div class="l"><div class="list"><div class="h"><fit-text w="32" style="margin-left:5px">Nom</fit-text><span style="flex:1"></span><ui-icon name="up" style="margin-right:7px"></ui-icon><div style="width:46px;height:24px;line-height:24px;border:solid #ceccc8;border-width:0 1px;padding-left:5px"><fit-text w="35">Taille</fit-text></div><div style="width:84px;padding-left:5px"><fit-text w="52">Modifié</fit-text></div></div></div><scroll-bar></scroll-bar></div>
<gtk-button style="width:141px;height:29px;margin:7px 1px 0 auto;justify-content:space-between;padding:0 7px 2px 5px"><fit-text w="47">Images</fit-text><span class="ct"><ui-icon name="up" s="6"></ui-icon><ui-icon name="down" s="6"></ui-icon></span></gtk-button></div></div>
<div class="act"><gtk-button style="width:83px;height:27px"><fit-text w="52">Annuler</fit-text></gtk-button><gtk-button suggested style="width:83px;height:27px"><fit-text w="41">Ouvrir</fit-text></gtk-button></div>`);

define('desk-top', `<style>
:host{display:block;width:1920px;height:1080px;position:relative;overflow:hidden}
.m{display:flex}
.w{flex:1;min-width:0}
.c{display:flex;height:985px;background:#d1d1d1;justify-content:space-between}
.c::before{content:"";width:406px;flex:none}
site-page{margin-right:auto;flex:none}
.c scroll-bar{--rest:86px;height:985px}
file-dialog{position:absolute;left:566px;top:237px}
</style><top-panel></top-panel><div class="m"><app-launcher></app-launcher><div class="w"><browser-chrome></browser-chrome><div class="c"><site-page></site-page><scroll-bar></scroll-bar></div></div></div><file-dialog></file-dialog>`);
fitted.forEach(fit);
document.fonts && document.fonts.ready.then(() => fitted.forEach(fit));
</script>
</body>
</html>
